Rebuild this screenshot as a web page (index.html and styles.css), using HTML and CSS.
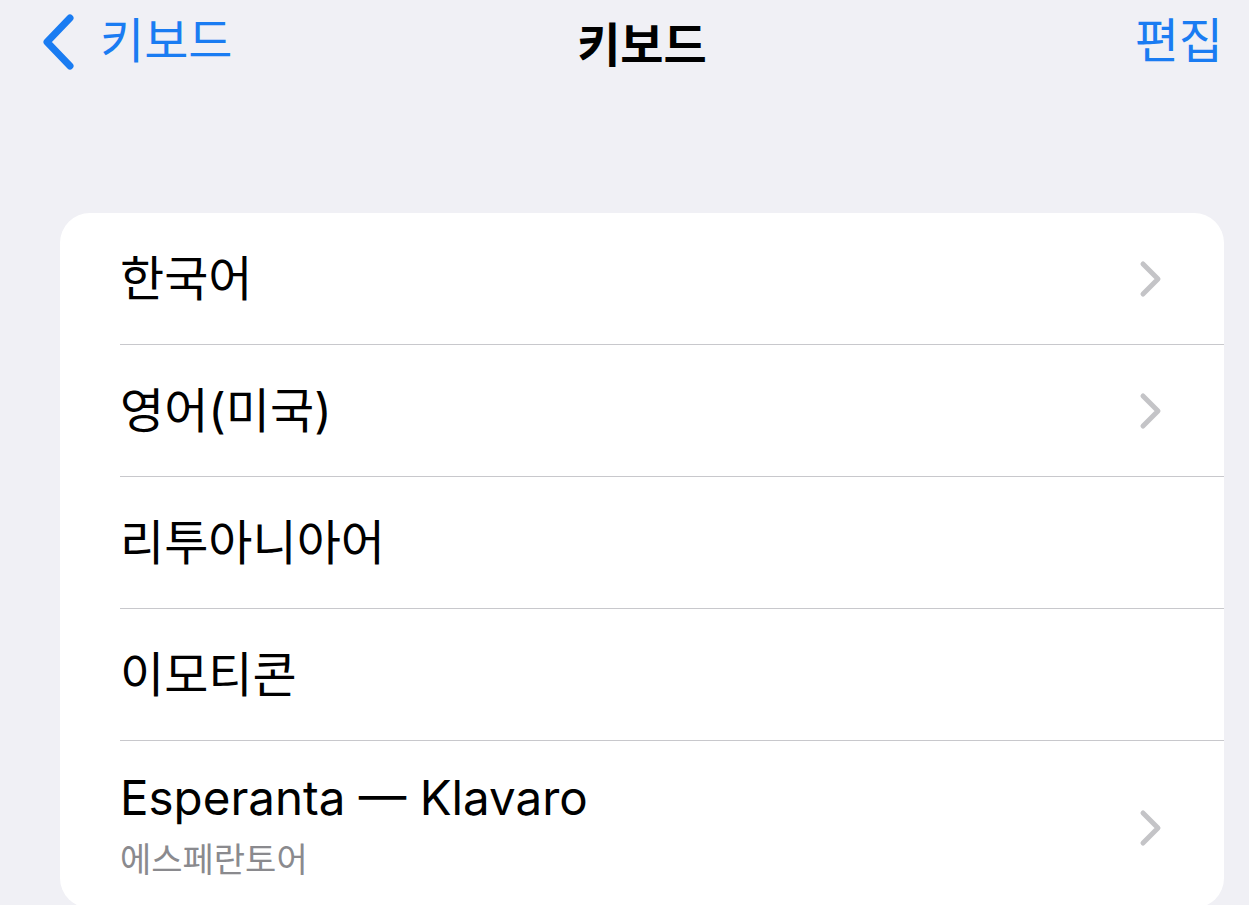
FILE: index.html
```html
<!DOCTYPE html>
<html lang="ko">
<head>
<meta charset="utf-8">
<title>키보드</title>
<link rel="stylesheet" href="styles.css">
</head>
<body>
<header class="nav">
  <a class="back">
    <svg class="back-icon" width="36" height="56" viewBox="0 0 36 56"><path d="M30 4 L7 28 L30 52" fill="none" stroke="#1a7cf2" stroke-width="7" stroke-linecap="round" stroke-linejoin="round"/></svg>
    <span class="back-label">키보드</span>
  </a>
  <h1 class="title">키보드</h1>
  <a class="edit">편집</a>
</header>
<main class="card">
  <div class="row"><span class="label">한국어</span><svg class="chev" width="26" height="38" viewBox="0 0 26 38"><path d="M5 4 L20 19 L5 34" fill="none" stroke="#c4c4c7" stroke-width="5" stroke-linecap="round" stroke-linejoin="round"/></svg></div>
  <div class="row"><span class="label">영어(미국)</span><svg class="chev" width="26" height="38" viewBox="0 0 26 38"><path d="M5 4 L20 19 L5 34" fill="none" stroke="#c4c4c7" stroke-width="5" stroke-linecap="round" stroke-linejoin="round"/></svg></div>
  <div class="row"><span class="label">리투아니아어</span></div>
  <div class="row"><span class="label">이모티콘</span></div>
  <div class="row row-tall"><div class="stack"><span class="label label-latin">Esperanta — Klavaro</span><span class="sub">에스페란토어</span></div><svg class="chev" width="26" height="38" viewBox="0 0 26 38"><path d="M5 4 L20 19 L5 34" fill="none" stroke="#c4c4c7" stroke-width="5" stroke-linecap="round" stroke-linejoin="round"/></svg></div>
</main>
</body>
</html>
```
FILE: styles.css
```css
html, body {
  margin: 0;
  padding: 0;
  height: 905px;
  overflow: hidden;
}
body {
  background: #f0f0f5;
  font-family: Inter, "Noto Sans CJK KR", sans-serif;
  color: #000;
}
.nav {
  position: relative;
  height: 84px;
  display: flex;
  align-items: center;
  justify-content: space-between;
  padding: 0 26px 0 40px;
}
.back {
  display: flex;
  align-items: center;
  gap: 24px;
  color: #1a7cf2;
}
.back-icon {
  display: block;
}
.back-label, .edit {
  font-size: 48px;
  color: #1a7cf2;
  line-height: 1;
}
.back-label {
  margin-top: -2px;
}
.edit {
  margin-top: -2px;
}
.title {
  position: absolute;
  left: 0;
  right: 0;
  top: 0;
  height: 82px;
  margin: 0;
  padding-left: 35px;
  display: flex;
  align-items: center;
  justify-content: center;
  font-size: 47px;
  font-weight: 700;
  pointer-events: none;
}
.card {
  margin: 129px 25px 0 60px;
  background: #fff;
  border-radius: 30px;
  overflow: hidden;
}
.row {
  height: 131px;
  margin-left: 60px;
  padding-right: 60px;
  display: flex;
  align-items: center;
  justify-content: space-between;
  border-bottom: 1px solid #c8c8cc;
}
.row-tall {
  height: 167px;
  border-bottom: none;
  align-items: flex-start;
}
.label {
  font-size: 48px;
  line-height: 1;
}
.label-latin {
  font-size: 47.5px;
}
.stack {
  display: flex;
  flex-direction: column;
  padding-top: 33px;
}
.sub {
  font-size: 34px;
  color: #8a8a8e;
  margin-top: 11px;
}
.chev {
  display: block;
}
.row-tall .chev {
  margin-top: 68px;
}
```
